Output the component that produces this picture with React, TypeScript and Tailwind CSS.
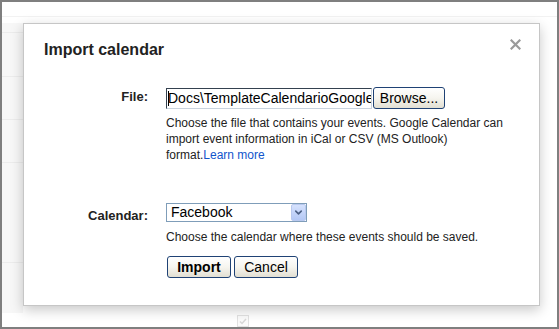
import { ChevronDown } from 'lucide-react'

const font = "font-['Liberation_Sans',Arial,sans-serif]"

function CloseIcon() {
  return (
    <svg width="11" height="11" viewBox="0 0 11 11" className="block">
      <path d="M1.5 1.5 L9.5 9.5 M9.5 1.5 L1.5 9.5" stroke="#9a9a9a" strokeWidth="2.2" strokeLinecap="square" />
    </svg>
  )
}

function XpButton({ children, bold, className }: { children: string; bold?: boolean; className?: string }) {
  return (
    <button
      type="button"
      className={`h-[22px] rounded-[3px] border border-[#1f4275] bg-gradient-to-b from-white via-[#f6f5ef] to-[#e2dfd2] text-[14px] leading-none text-black ${bold ? 'font-bold' : ''} ${className ?? ''}`}
    >
      {children}
    </button>
  )
}

export default function App() {
  return (
    <div className={`relative h-[329px] w-[559px] overflow-hidden border-2 border-[#7f7f7f] bg-white ${font}`}>
      {/* faint calendar page behind the dialog */}
      <div className="pointer-events-none absolute inset-0">
        <div className="absolute left-0 right-0 top-[14px] h-px bg-[#f2f2f2]" />
        <div className="absolute left-0 top-[21px] h-[290px] w-[21px] bg-[#f7f7f7]" />
        <div className="absolute left-0 top-[30px] h-px w-[21px] bg-[#ececec]" />
        <div className="absolute left-0 top-[74px] h-px w-[21px] bg-[#ececec]" />
        <div className="absolute left-0 top-[117px] h-px w-[21px] bg-[#ececec]" />
        <div className="absolute left-0 top-[160px] h-px w-[21px] bg-[#ececec]" />
        <div className="absolute left-0 top-[260px] h-px w-[21px] bg-[#ececec]" />
      </div>

      <div className="relative pl-[21px] pt-[21px]">
        <div className="relative h-[283px] w-[517px] border border-[#c6c6c6] bg-white pl-[20px] pt-[16px] shadow-[0_4px_12px_rgba(0,0,0,0.22)]">
          <h2 className="text-[16px] font-bold leading-[20px] text-[#222]">Import calendar</h2>
          <button type="button" className="absolute right-[18px] top-[15px]">
            <CloseIcon />
          </button>

          {/* File row */}
          <div className="mt-[28px] flex items-start">
            <label className="w-[104px] pt-[1px] text-right text-[13px] font-bold leading-[16px] text-[#222]">File:</label>
            <div className="ml-[18px] flex items-start">
              <div className="relative h-[21px] w-[206px] overflow-hidden border border-b-[#c9d3de] border-l-[#34414f] border-r-[#c9d3de] border-t-[#34414f] bg-white">
                <span className="absolute left-[1px] top-[2px] h-[15px] w-px bg-black" />
                <span className="block whitespace-nowrap pl-[1px] text-[14px] leading-[19px] text-black">
                  Docs\TemplateCalendarioGoogle.csv
                </span>
              </div>
              <XpButton className="-mt-px ml-px w-[72px]">Browse...</XpButton>
            </div>
          </div>
          <p className="ml-[122px] mt-[6px] whitespace-nowrap text-[12px] leading-[16px] text-[#222]">
            Choose the file that contains your events. Google Calendar can
            <br />
            import event information in iCal or CSV (MS Outlook)
            <br />
            format.<a className="text-[#1155cc]">Learn more</a>
          </p>

          {/* Calendar row */}
          <div className="mt-[40px] flex items-start">
            <label className="w-[104px] pt-[5px] text-right text-[13px] font-bold leading-[16px] text-[#222]">Calendar:</label>
            <div className="ml-[18px] flex h-[19px] w-[141px] items-stretch border border-[#7f9db9] bg-white">
              <span className="flex-1 pl-[4px] text-[14px] leading-[17px] text-black">Facebook</span>
              <span className="flex w-[15px] items-center justify-center rounded-[2px] border border-[#b9c9ef] bg-gradient-to-b from-[#d6e2fd] to-[#b4c8f5]">
                <ChevronDown size={11} strokeWidth={3.5} className="text-[#4d6185]" />
              </span>
            </div>
          </div>
          <p className="ml-[122px] mt-[5px] whitespace-nowrap text-[12px] leading-[16px] text-[#222]">
            Choose the calendar where these events should be saved.
          </p>

          <div className="ml-[123px] mt-[11px] flex gap-[3px]">
            <XpButton bold className="w-[64px]">Import</XpButton>
            <XpButton className="w-[64px]">Cancel</XpButton>
          </div>
        </div>

        {/* faded checkbox of the page below */}
        <div className="ml-[214px] mt-[9px] flex h-[12px] w-[12px] items-center justify-center border border-[#e2e2e2] bg-[#fbfbfb]">
          <svg width="8" height="7" viewBox="0 0 8 7">
            <path d="M1 3.5 L3 5.5 L7 1" stroke="#d8d8d8" strokeWidth="1.5" fill="none" />
          </svg>
        </div>
      </div>
    </div>
  )
}
